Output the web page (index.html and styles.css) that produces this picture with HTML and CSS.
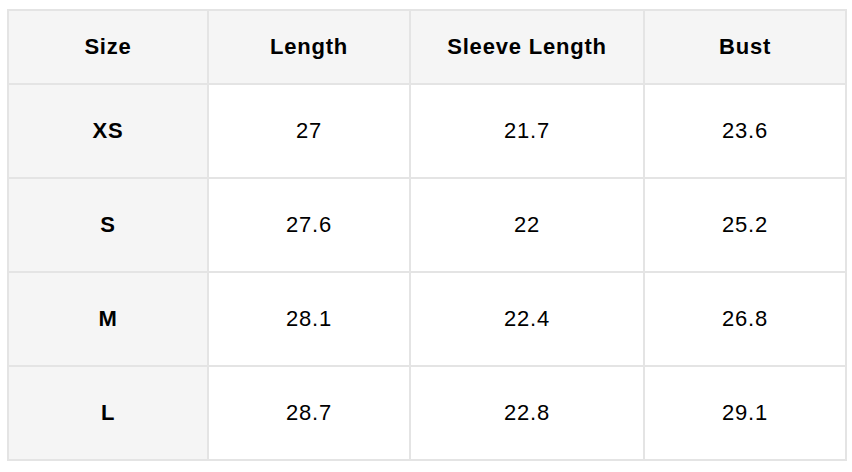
FILE: index.html
```html
<!DOCTYPE html>
<html lang="en">
<head>
<meta charset="utf-8">
<title>Size Chart</title>
<link rel="stylesheet" href="styles.css">
</head>
<body>
<div class="page">
  <div class="chart" role="table">
    <div class="cell head" role="columnheader">Size</div>
    <div class="cell head" role="columnheader">Length</div>
    <div class="cell head" role="columnheader">Sleeve Length</div>
    <div class="cell head" role="columnheader">Bust</div>

    <div class="cell label" role="rowheader">XS</div>
    <div class="cell">27</div>
    <div class="cell">21.7</div>
    <div class="cell">23.6</div>

    <div class="cell label" role="rowheader">S</div>
    <div class="cell">27.6</div>
    <div class="cell">22</div>
    <div class="cell">25.2</div>

    <div class="cell label" role="rowheader">M</div>
    <div class="cell">28.1</div>
    <div class="cell">22.4</div>
    <div class="cell">26.8</div>

    <div class="cell label" role="rowheader">L</div>
    <div class="cell">28.7</div>
    <div class="cell">22.8</div>
    <div class="cell">29.1</div>
  </div>
</div>
</body>
</html>
```

FILE: styles.css
```css
* { box-sizing: border-box; }
html, body {
  margin: 0;
  padding: 0;
  background: #ffffff;
}
.page {
  padding: 9px 0 0 7px;
}
.chart {
  display: grid;
  grid-template-columns: 200px 202px 234px 202px;
  grid-template-rows: 74px repeat(4, 94px);
  width: 840px;
  border-left: 2px solid #e4e4e4;
  border-top: 2px solid #e4e4e4;
  font-family: "Liberation Sans", Arial, Helvetica, sans-serif;
  font-size: 22px;
  letter-spacing: 0.8px;
  color: #000000;
}
.cell {
  display: flex;
  align-items: center;
  justify-content: center;
  border-right: 2px solid #e4e4e4;
  border-bottom: 2px solid #e4e4e4;
  background: #ffffff;
}
.head, .label {
  background: #f5f5f5;
  font-weight: bold;
}
```
